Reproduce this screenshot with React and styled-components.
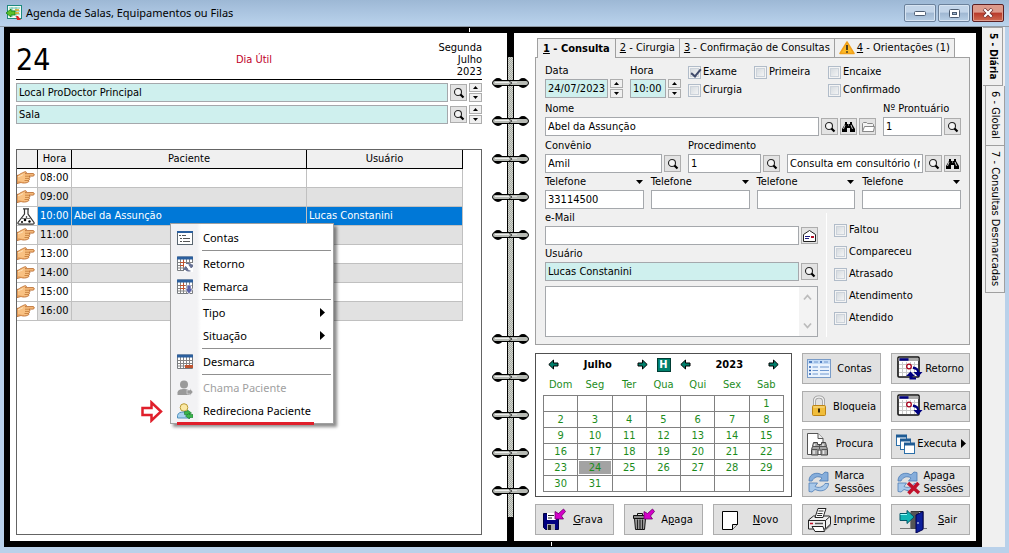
import { useId } from "react";
import styled, { createGlobalStyle, css } from "styled-components";

const GlobalStyle = createGlobalStyle`
  * {
    box-sizing: border-box;
  }

  body {
    margin: 0;
    background: #b9d1ea;
    color: #000;
    font-family: "DejaVu Sans Condensed", "DejaVu Sans", sans-serif;
    font-size: 11px;
    line-height: 12px;
  }

  button,
  input,
  textarea {
    margin: 0;
    font: inherit;
    color: inherit;
  }

  svg {
    display: block;
    flex: none;
  }
`;

const StyledWindow = styled.div`
  min-height: 100vh;
  display: flex;
  flex-direction: column;
  background: #b9d1ea;
`;

const StyledTitleBar = styled.header`
  height: 27px;
  padding: 0 5px 0 6px;
  display: flex;
  align-items: center;
  gap: 4px;

  background: linear-gradient(#9db8d5, #a9c3df 40%, #bad3ec);
  border-bottom: 1px solid #8f9aa5;
`;

const StyledTitle = styled.h1`
  flex: 1;
  margin: 0;

  font-family: "Noto Sans", "Open Sans", sans-serif;
  font-size: 11px;
  font-weight: 400;
  line-height: 16px;
`;

const StyledWindowButtons = styled.div`
  display: flex;
  gap: 2px;
`;

const StyledWindowButton = styled.button`
  width: 32px;
  height: 18px;
  padding: 0;
  display: grid;
  place-items: center;

  border: 1px solid ${({ $close }) => ($close ? "#5b1f22" : "#6b819b")};
  border-radius: 2px;
  box-shadow: inset 0 0 0 1px ${({ $close }) => ($close ? "#e09a8c" : "#d7e4f2")};
  background: ${({ $close }) =>
    $close
      ? "linear-gradient(#dc9a8b 45%, #b8392a 50%, #cf6a50)"
      : "linear-gradient(#c3d5e9 45%, #9fb7d2 50%, #b8cfe6)"};
`;

const StyledBody = styled.div`
  flex: 1;
  padding: 0 4px 6px;
  display: flex;
`;

const StyledBook = styled.main`
  position: relative;
  flex: 1;
  min-width: 0;
  display: grid;
  grid-template-columns: 497fr 7px 462fr;

  background: #fff;
  border: 6px solid #000;
`;

const StyledTick = styled.i`
  position: absolute;
  width: 1px;
  height: 4px;
  background: #fff;

  ${({ $bottom }) =>
    $bottom
      ? css`
          bottom: -5px;
          left: 56%;
        `
      : css`
          top: -5px;
          left: 47.5%;
        `}
`;

const StyledLeftPage = styled.section`
  position: relative;
  min-width: 0;
  padding: 7px 25px 6px 6px;
  display: flex;
  flex-direction: column;
`;

const StyledRightPage = styled.section`
  min-width: 0;
  padding: 5px 6px 6px 21px;
  display: flex;
  flex-direction: column;
`;

const StyledSpine = styled.div`
  z-index: 1;
  padding: 21px 0;
  display: flex;
  flex-direction: column;
  justify-content: space-between;

  border: solid #000;
  border-width: 24px 1px;
  background: repeating-conic-gradient(#d5d8d0 0 25%, #a5a8a2 0 50%) 0 0 / 2px 2px;
`;

const StyledRings = styled.div`
  display: grid;
  gap: 28px;

  svg {
    margin: 0 -16px;
  }
`;

const StyledDayHeader = styled.header`
  height: 40px;
  display: grid;
  grid-template-columns: 1fr auto 1fr;
  align-items: center;

  border-bottom: 1px solid #000;
`;

const StyledDay = styled.strong`
  font-size: 30px;
  font-weight: 400;
  line-height: 36px;
`;

const StyledDayKind = styled.span`
  padding-left: 10px;
  color: #c00028;
`;

const StyledDayDate = styled.span`
  text-align: right;
`;

const StyledLocations = styled.div`
  margin: 3px 0 25px;
  display: grid;
  gap: 3px;
`;

const StyledRow = styled.div`
  display: flex;
  align-items: center;
  gap: 2px;
`;

const StyledInput = styled.input`
  flex: 1 1 0;
  width: 0;
  min-width: 0;
  height: 19px;
  padding: 0 2px;

  background: ${({ $tinted }) => ($tinted ? "#cff0ee" : "#fff")};
  border: 1px solid #a5a8ac;
  border-radius: 0;
  outline: none;
`;

const StyledIconButton = styled.button`
  flex: none;
  width: 17px;
  height: 17px;
  padding: 0;
  display: grid;
  place-items: center;

  background: #e3e3e3;
  border: 1px solid #adadad;
`;

const StyledSpin = styled.div`
  flex: none;
  width: 13px;
  display: grid;
  gap: 1px;
`;

const StyledSpinButton = styled.button`
  height: 9px;
  padding: 0;
  display: grid;
  place-items: center;

  background: #f0f0f0;
  border: 1px solid #adadad;
`;

const StyledAgenda = styled.div`
  flex: 1;
  padding-right: 18px;
  border: 1px solid #646464;
`;

const StyledTable = styled.table`
  width: 100%;
  table-layout: fixed;
  border-collapse: separate;
  border-spacing: 0;
`;

const StyledHeadCell = styled.th`
  width: ${({ $width }) => $width || "auto"};
  height: 19px;
  padding: 0;

  background: #f0f0f0;
  border-right: 1px solid #000;
  border-bottom: 1px solid #000;
  font-weight: 400;
`;

const StyledCell = styled.td`
  height: 19px;
  padding: 0 2px;
  overflow: hidden;

  border-right: 1px solid #c0c0c0;
  border-bottom: 1px solid #c0c0c0;
  white-space: nowrap;
`;

const StyledIconCell = styled(StyledCell)`
  padding: 0;
  background: #fff;
`;

const StyledAgendaRow = styled.tr`
  color: ${({ $selected }) => ($selected ? "#fff" : "#000")};
  background: ${({ $selected, $odd }) =>
    $selected ? "#0078d7" : $odd ? "#e1e1e1" : "#fff"};
`;

const StyledMenu = styled.ul`
  position: absolute;
  top: 190px;
  left: 160px;
  width: 164px;
  margin: 0;
  padding: 2px 2px 1px;

  list-style: none;
  background: linear-gradient(to right, #f2f2f4 26px, #fff 30px);
  border: 1px solid #a0a0a0;
  box-shadow: 3px 3px 3px rgba(0, 0, 0, 0.45);
  font-family: "Noto Sans", "Open Sans", sans-serif;
`;

const StyledMenuItem = styled.button`
  width: 100%;
  height: 23px;
  padding: 0 6px 0 4px;
  display: flex;
  align-items: center;
  gap: 10px;

  background: none;
  border: 0;
  text-align: left;
  white-space: nowrap;

  &:disabled {
    color: #a0a0a0;
  }
`;

const StyledMenuLabel = styled.span`
  flex: 1;
`;

const StyledMenuSeparator = styled.li`
  height: 1px;
  margin: 1px 0 1px 29px;
  background: #909090;
`;

const StyledMarker = styled.div`
  position: absolute;
  top: 367px;
  left: 131px;
`;

const StyledUnderline = styled.li`
  position: absolute;
  right: 19px;
  bottom: -2px;
  left: 6px;
  height: 3px;
  background: #e01f2b;
`;

const StyledTabs = styled.div`
  padding-left: 2px;
  display: flex;
`;

const StyledTab = styled.button`
  height: 19px;
  margin-bottom: ${({ $active }) => ($active ? "-1px" : "0")};
  padding: 0 4px;
  display: flex;
  align-items: center;
  gap: 2px;
  z-index: ${({ $active }) => ($active ? 1 : 0)};

  background: #f0f0f0;
  border: 1px solid #a0a0a0;
  border-left-width: ${({ $active }) => ($active ? "1px" : "0")};
  border-bottom: 0;
  font-weight: ${({ $active }) => ($active ? 700 : 400)};
  white-space: nowrap;

  ${({ $active }) =>
    $active &&
    css`
      height: 20px;
      padding: 0 5px;
      position: relative;
    `}
`;

const StyledPanel = styled.form`
  padding: 4px 8px 7px 9px;

  background: #f0f0f0;
  border: 1px solid #a0a0a0;
`;

const StyledFieldRow = styled.div`
  margin-bottom: ${({ $gap }) => ($gap ? "1px" : "0")};
  display: grid;
  grid-template-columns: ${({ $columns }) => $columns};
  gap: 7px;
`;

const StyledField = styled.div`
  min-width: 0;
`;

const StyledLabelRow = styled.div`
  height: 17px;
  padding-right: 1px;
  display: flex;
  align-items: center;
  justify-content: space-between;
  white-space: nowrap;
`;

const StyledChecks = styled.div`
  display: grid;
  grid-template-columns: ${({ $columns }) => $columns || "1fr"};
  grid-auto-rows: ${({ $columns }) => ($columns ? "18px" : "22px")};
  padding-top: ${({ $columns }) => ($columns ? "1px" : "0")};
  align-content: start;
`;

const StyledCheckLabel = styled.label`
  display: flex;
  align-items: center;
  gap: 2px;
`;

const StyledCheckbox = styled.input`
  appearance: none;
  position: relative;
  width: 13px;
  height: 13px;

  background: linear-gradient(135deg, #cfd5da, #fafafa);
  border: 1px solid #b1bcc9;
  box-shadow: inset 0 0 0 1px #f4f4f4, inset 0 0 0 2px #ccd3db;

  &:checked::after {
    content: "";
    position: absolute;
    top: 0;
    left: 4px;
    width: 4px;
    height: 8px;
    border: solid #3f4a6a;
    border-width: 0 2px 2px 0;
    transform: rotate(40deg);
  }
`;

const StyledLower = styled.div`
  display: grid;
  grid-template-columns: 1fr 135px;
  gap: 8px;
`;

const StyledStatus = styled.div`
  margin-top: 4px;
  padding: 6px 0 0 7px;
  border-left: 1px solid #fff;
`;

const StyledMemo = styled.div`
  height: 51px;
  margin-top: 5px;
  display: flex;

  background: #fff;
  border: 1px solid #a5a8ac;
`;

const StyledTextarea = styled.textarea`
  flex: 1;
  min-width: 0;
  padding: 2px;

  background: none;
  border: 0;
  outline: none;
  resize: none;
`;

const StyledScroll = styled.div`
  width: 18px;
  padding: 7px 4px;
  display: flex;
  flex-direction: column;
  justify-content: space-between;
  background: #f3f3f3;
`;

const StyledBottom = styled.div`
  flex: 1;
  margin-top: 8px;
  display: grid;
  grid-template-columns: repeat(5, 1fr);
  grid-template-rows: repeat(5, 1fr);
  gap: 7px 10px;
`;

const StyledCommand = styled.button`
  min-width: 0;
  padding: 0 3px;
  display: flex;
  align-items: center;

  background: #e1e1e1;
  border: 1px solid #adadad;
  white-space: nowrap;
`;

const StyledCommandLabel = styled.span`
  flex: 1;
  display: flex;
  justify-content: center;
  align-items: center;
  gap: 4px;
  text-align: left;
  line-height: 13px;
  white-space: pre;
`;

const StyledCalendar = styled.div`
  grid-column: 1 / 4;
  grid-row: 1 / 5;
  padding: 0 7px;
  border: 1px solid #505050;
`;

const StyledCalendarHead = styled.div`
  height: 21px;
  padding: 0 5px;
  display: grid;
  grid-template-columns: 11px 1fr 11px 32px 11px 1fr 11px;
  align-items: center;
  justify-items: center;
  font-weight: 700;
`;

const StyledArrowButton = styled.button`
  padding: 0;
  background: none;
  border: 0;
`;

const StyledToday = styled.button`
  width: 14px;
  height: 14px;
  padding: 0;

  color: #fff;
  background: #00806c;
  border: 1px solid #003c34;
  font-weight: 700;
  line-height: 12px;
`;

const StyledMonth = styled.table`
  width: 100%;
  table-layout: fixed;
  border-collapse: collapse;
  color: #1c8c1c;
  text-align: center;

  th {
    height: 20px;
    padding: 0;
    font-weight: 400;
  }

  td {
    height: 16px;
    padding: 1px;
    border: 1px solid #808080;
  }
`;

const StyledDate = styled.span`
  display: block;
  height: 13px;
  line-height: 13px;
  background: ${({ $today }) => ($today ? "#a3a3a3" : "none")};
`;

const StyledSideTabs = styled.nav`
  width: 23px;
  padding-left: 3px;
  display: flex;
  flex-direction: column;
  background: #f0f0f0;
`;

const StyledSideTab = styled.button`
  width: 20px;
  margin-left: ${({ $active }) => ($active ? "-2px" : "0")};
  padding: 5px 0 6px;
  writing-mode: vertical-rl;

  background: #f0f0f0;
  border: 1px solid #a0a0a0;
  border-top-width: ${({ $active }) => ($active ? "1px" : "0")};
  border-left-width: ${({ $active }) => ($active ? "0" : "1px")};
  font-size: ${({ $active }) => ($active ? "10px" : "11px")};
  font-weight: ${({ $active }) => ($active ? 700 : 400)};
  text-align: left;
  white-space: nowrap;
`;

const AppIcon = () => (
  <svg width="16" height="16" viewBox="0 0 16 16">
    <rect x="1.5" y="0.5" width="14" height="13" fill="#f4fbf4" stroke="#1e8a80" />
    <path d="M3 3h11M3 6h11M3 9h11M6 2v10M10 2v10" stroke="#6fc4b0" />
    <path d="M0 8l5-4v2h4v4H5v2z" fill="#5cc02a" stroke="#0e7d15" strokeWidth=".8" />
    <path d="M9 5h4M9 8h4" stroke="#d6a21e" strokeWidth="1.5" />
    <path d="M10 11h2l3 4h-4z" fill="#e0252b" />
  </svg>
);

const SearchIcon = () => (
  <svg width="12" height="12" viewBox="0 0 12 12">
    <circle cx="5" cy="5" r="3.5" fill="#f4f4f4" stroke="#222" strokeWidth="1.1" />
    <path d="M7.5 7.5l3 3" stroke="#000" strokeWidth="2.2" />
  </svg>
);

const BinocularsIcon = () => (
  <svg width="13" height="12" viewBox="0 0 13 12">
    <path d="M3 1h2v2h3V1h2v2l3 5v3H8V7H5v4H0V8l3-5z" fill="#000" />
    <path d="M3 4L1.5 8M9 4l1.500 4M6 4h1" stroke="#ddd" strokeWidth=".9" />
  </svg>
);

const FolderIcon = () => (
  <svg width="14" height="12" viewBox="0 0 14 12">
    <path d="M1.500 10.500v-8l1-1h3l1 1h5l1 1v7z" fill="#f3f3f3" stroke="#888" />
    <path d="M1.500 10.500l2-5h10l-1 5z" fill="#fff" stroke="#888" />
  </svg>
);

const MailIcon = () => (
  <svg width="13" height="12" viewBox="0 0 13 12">
    <path d="M.5 4.500l6-4 6 4v7H.5z" fill="#fff" stroke="#222" />
    <path d="M2 6.500h5M2 8.500h4" stroke="#1a1a80" />
    <path d="M8 6h3v2H8z" fill="#b3122a" />
  </svg>
);

const TriangleIcon = ({ direction = "down", size = 5 }) => (
  <svg
    width={direction === "right" ? (size + 1) / 2 : size}
    height={direction === "right" ? size : (size + 1) / 2}
    viewBox={direction === "right" ? "0 0 3 5" : "0 0 5 3"}
    preserveAspectRatio="none"
  >
    <path
      d={{ up: "M0 3h5L2.500 0z", down: "M0 0h5L2.500 3z", right: "M0 0v5l3-2.500z" }[direction]}
    />
  </svg>
);

const ChevronIcon = ({ up }) => (
  <svg width="9" height="7" viewBox="0 0 9 7">
    <path
      d={up ? "M1 5.500l3.500-4 3.500 4" : "M1 1.500l3.500 4 3.500-4"}
      fill="none"
      stroke="#bcbcbc"
      strokeWidth="1.800"
    />
  </svg>
);

const WarningIcon = () => (
  <svg width="16" height="14" viewBox="0 0 16 14">
    <path
      d="M8 1l7 11.500H1z"
      fill="#fdb924"
      stroke="#f0a01a"
      strokeWidth="1.500"
      strokeLinejoin="round"
    />
    <path d="M8 4v5M8 10.200v1.600" stroke="#222" strokeWidth="1.600" />
  </svg>
);

const HandIcon = () => (
  <svg width="18" height="14" viewBox="0 0 18 14">
    <path
      d="M0 4.500C2 4.300 3 2.800 4.500 2.300 6 1.700 7.500.6 8.600.7c1.200.2.8 1.600-.2 2L16 2.600c1.700 0 1.700 2.400 0 2.500h-4c1.300.5 1.200 2-.1 2.200.9.500.7 1.900-.5 2.100.7.500.4 1.800-.8 1.900-1.600.8-4.600 1-6.600.2L0 12.500z"
      fill="#f9c182"
      stroke="#b8682a"
      strokeWidth=".9"
    />
    <path d="M8 5.200h4M8 7.400h4M7.500 9.500h4" stroke="#c47e3c" strokeWidth=".9" />
    <path d="M1 11c2-.4 3 .8 6 .4" fill="none" stroke="#dd9350" />
    <path d="M1 5.800c2-.3 3-1.500 5-2.200" fill="none" stroke="#fde3bd" />
  </svg>
);

const FlaskIcon = () => (
  <svg width="19" height="17" viewBox="0 0 19 17">
    <path
      d="M6 .8h6M7.500 1v5L1 14.500c-.4 1 .2 1.700 1 1.700h14c.8 0 1.400-.7 1-1.700L11 6V1"
      fill="#fff"
      stroke="#333"
      strokeWidth="1.200"
    />
    <path d="M5 10.500h8.500" stroke="#777" />
    <circle cx="8" cy="12" r="1.300" />
    <circle cx="12.500" cy="13.500" r="1.200" />
    <circle cx="5" cy="14" r="1" />
    <circle cx="9.500" cy="9" r=".8" />
  </svg>
);

const RingIcon = () => (
  <svg width="37" height="10" viewBox="0 0 37 10">
    <ellipse cx="6" cy="5" rx="5" ry="5" />
    <ellipse cx="31" cy="5" rx="5" ry="5" />
    <rect x=".5" y="2.500" width="36" height="5" rx="2.500" fill="#b8bbb5" stroke="#000" />
    <path d="M3 4.500h14" stroke="#eee" />
    <path d="M17 3l3 2-3 2" fill="none" stroke="#222" strokeWidth=".8" />
    <path d="M20 4.500h5" stroke="#ddd" />
  </svg>
);

const MarkerIcon = () => (
  <svg width="22" height="23" viewBox="0 0 22 23">
    <path d="M1.500 8h9V2.500L20 11.500l-9.500 9V15h-9z" fill="#fff" stroke="#e01f2b" strokeWidth="2.500" />
  </svg>
);

const ListIcon = () => (
  <svg width="16" height="14" viewBox="0 0 16 14" shapeRendering="crispEdges">
    <rect x=".5" y=".5" width="15" height="13" fill="#fff" stroke="#5a6670" />
    <path d="M0 1h16" stroke="#2b5f9e" strokeWidth="2" />
    <path d="M2 4.500h2M5 4.500h4M3 7.500h2M6 7.500h7M3 10.500h2M6 10.500h7" stroke="#555" />
  </svg>
);

const MenuGridIcon = ({ variant }) => (
  <svg width="16" height="16" viewBox="0 0 16 16">
    <path d="M.5 1v13.500h15V1z" fill="#fff" stroke="#787c80" />
    <path d="M1 6.500h14M1 9.500h14M1 12h14M3.500 3v11M6.500 3v11M9.500 3v11M12.500 3v11" stroke="#858585" />
    <path d="M0 2h16" stroke="#2b5f9e" strokeWidth="3" />
    {variant !== "clear" && <path d="M3 6.500h5M3 9.500h5M6.500 4v7" stroke="#c0532e" />}
    {variant === "return" && (
      <>
        <path d="M7 7h9v9H7z" fill="#fff" />
        <path
          d="M9 7.500h3q2.500 0 2.500 2M13.500 15H11q-2.500 0-2.500-2M12 9h4.500l-2.200 3zM6.500 13.500H11L8.700 10.500z"
          fill="#667092"
          stroke="#667092"
        />
      </>
    )}
    {variant === "move" && (
      <path d="M10 6h4v4h2l-4 5-4-5h2z" fill="#5a61a8" stroke="#fff" strokeWidth=".6" />
    )}
    {variant === "clear" && <path d="M8 12.500h8" stroke="#c0532e" strokeWidth="3" />}
  </svg>
);

const PersonIcon = ({ redirect }) => (
  <svg width="16" height="16" viewBox="0 0 16 16">
    <circle
      cx="7"
      cy="4.500"
      r={redirect ? 3.800 : 4}
      fill={redirect ? "#fbe9a5" : "#9a9a9a"}
      stroke={redirect ? "#b99a35" : "none"}
    />
    <path
      d="M.5 15v-2.500C1 9.500 4 9 7 9s5.500.5 6 3.500V15z"
      fill={redirect ? "#a9d2ee" : "#9a9a9a"}
      stroke={redirect ? "#5090bd" : "none"}
    />
    {redirect ? (
      <>
        <path d="M7.500 8.500h3V7l4 3-4 3v-1.500h-3z" fill="#39b54a" stroke="#157a2a" strokeWidth=".6" />
        <path d="M16 11.500h-3.500V10L8.500 13l4 3v-1.500H16z" fill="#39b54a" stroke="#157a2a" strokeWidth=".6" />
      </>
    ) : (
      <path d="M10 10h3V8.500l3 3.500-3 3.500V14h-3z" fill="#9a9a9a" stroke="#f2f2f4" strokeWidth=".5" />
    )}
  </svg>
);

const ArrowIcon = ({ left }) => (
  <svg width="11" height="11" viewBox="0 0 11 11">
    <path
      d={left ? "M.8 5.500L5.500 1v3h4.500v3H5.500v3z" : "M10.200 5.500L5.500 1v3H1v3h4.500v3z"}
      fill="#00806c"
      stroke="#000"
    />
  </svg>
);

const AccountsIcon = () => (
  <svg width="26" height="26" viewBox="0 0 26 26">
    <rect x="1.500" y="4.500" width="23" height="18" fill="#eaf3fd" stroke="#7a9cc8" />
    <path d="M2 7h22" stroke="#c5dcf6" strokeWidth="4" />
    <path d="M3 7h3M14 7h2M3 12h2M3 15.500h2M3 19h2" stroke="#2a5fae" strokeWidth="1.600" />
    <path d="M6.500 12H12M6.500 15.500H12M6.500 19H12M14 12h9M14 15.500h9M14 19h9M8 7h4M18 7h4" stroke="#6f98d0" />
  </svg>
);

const LockIcon = () => (
  <svg width="26" height="26" viewBox="0 0 26 26">
    <path d="M8.500 13V8q0-4 4.500-4t4.500 4v5" fill="none" stroke="#999" strokeWidth="3" />
    <path d="M8.500 13V8q0-4 4.500-4t4.500 4v5" fill="none" stroke="#efefef" strokeWidth="1.400" />
    <rect x="6.500" y="12.500" width="13" height="10" rx="1" fill="#f0bd3a" stroke="#bd8415" />
    <path d="M7.500 14h11" stroke="#fbe19a" />
    <path d="M12 15.500h2v4h-2z" fill="#3a2a08" />
  </svg>
);

const FindIcon = () => (
  <svg width="26" height="26" viewBox="0 0 26 26">
    <path d="M1.500 2.500H12l5 5v16H1.500z" fill="#fff" stroke="#555" />
    <path d="M12 2.500v5h5" fill="#eee" stroke="#555" />
    <path
      d="M7.500 11.500h4v2h4v-2h4l1 4 1 3v5.500h-6.500v-5h-3v5H5.500v-5.500l1-3z"
      fill="#a6a6a6"
      stroke="#444"
    />
    <path d="M6 18.500h5.500M15.500 18.500h5.500M7 15.500h13M13.500 14v4" stroke="#555" />
    <path d="M8.500 13v2M8 19.500v3.500M17.500 19.500v3.500M17 13v2" stroke="#e8e8e8" strokeWidth="1.500" />
  </svg>
);

const SyncIcon = ({ remove }) => (
  <svg width="26" height="26" viewBox="0 0 26 26">
    <path
      d="M3 12c0-6 5-8.500 10-7.500l3 1.300L19 3l3 .5v8.500h-8.500l2.500-3C12 6.500 8 8 6 12z"
      fill="#85addb"
      stroke="#4c7cb5"
      strokeWidth=".8"
    />
    <path
      d="M22.500 14.500c0 5-5 8.500-10.500 7L9 20.500 6 23l-3-.5V14h8.500L9 17.500c4 2 8 .5 10-3z"
      fill="#a8c8ea"
      stroke="#4c7cb5"
      strokeWidth=".8"
    />
    {remove && <path d="M13 14l11 10M23.500 14l-10 10.500" stroke="#c1112b" strokeWidth="3.500" />}
  </svg>
);

const PrinterIcon = () => (
  <svg width="26" height="26" viewBox="0 0 26 26">
    <path d="M19 17l6-3v5l-6 5z" fill="#999" />
    <path d="M2.500 13l5-4h16l1 1v7l-5 5H2.500z" fill="#eee" stroke="#222" />
    <path d="M2.500 13.500h17v8M19.500 13.500l4.500-4" fill="none" stroke="#222" />
    <path d="M9 10.500l3-9h8l-3 9z" fill="#fff" stroke="#222" />
    <path d="M12.500 4h5M11.500 6.500h5M11 8.500h5" stroke="#333" />
    <path d="M6 19.500h11l1.500 5H9z" fill="#fff" stroke="#222" />
    <path d="M4 16.500h3" stroke="#c1112b" strokeWidth="1.500" />
    <path d="M9 16.500h8" stroke="#555" strokeWidth="1.500" />
  </svg>
);

const CalendarIcon = ({ both }) => (
  <svg width="28" height="26" viewBox="0 0 28 26">
    <rect x="3" y="2" width="21" height="20" rx="1" fill="#fff" stroke="#111" strokeWidth="1.600" />
    <path d="M3.500 4.500h20" stroke="#aaa" strokeWidth="3" />
    <path d="M4.500 4.500h9" stroke="#000080" strokeWidth="2.500" />
    <path d="M4 9.500h19M4 13.500h19M4 17.500h19M7.500 7v14M11.500 7v14M15.500 7v14M19.500 7v14" stroke="#c9c9c9" />
    <circle cx="14" cy="11.500" r="2.300" fill="#fff" stroke="#a8001c" strokeWidth="1.300" />
    <path d="M18 11.500q6 .5 6 5.500h3.500L23 22l-4.500-5H22q0-2.500-4-3z" fill="#000080" />
    {both && <path d="M21 24.500h-6.500V21H11l4.500-4.500L20 21h-2.500v1.500H21z" fill="#000080" />}
  </svg>
);

const RunIcon = () => (
  <svg width="22" height="26" viewBox="0 0 22 26">
    {[0, 4, 8].map((step) => (
      <g key={step} transform={`translate(${step} ${step})`}>
        <rect x="1.500" y="4.500" width="10" height="10" fill="#fff" stroke="#2c6fa8" />
        <path d="M1 5h11" stroke="#1e5b94" strokeWidth="3" />
      </g>
    ))}
  </svg>
);

const DoorIcon = () => (
  <svg width="34" height="26" viewBox="0 0 34 26">
    <path d="M5 21.500h27" stroke="#777" />
    <path d="M16 21V4.500h12V21z" fill="#e5e5e5" stroke="#222" />
    <path d="M16 4.500h8V21h-8z" fill="#555" />
    <path d="M21 8l7-3.500v18l-7 3.500z" fill="#0d1f9b" stroke="#000050" />
    <path d="M23 15v2" stroke="#fff" />
    <path d="M5 6.500h7V3.500l7 6.500-7 6.500v-3H5z" fill="#10b5b5" stroke="#056" />
    <path d="M5.500 7.500H12" stroke="#9ff" />
  </svg>
);

const SaveIcon = () => (
  <svg width="27" height="26" viewBox="0 0 27 26">
    <path d="M4.500 6.500h15v16h-13l-2-2z" fill="#000080" stroke="#000040" />
    <path d="M8 6h9v7H8z" fill="#fff" />
    <path d="M9 8.500h6M9 11h4" stroke="#222" />
    <path d="M8 17h8v6H8z" fill="#aaa" />
    <path d="M9 18h3v5H9z" fill="#222" />
    <path d="M26.500 4.500L22.500 9l2 3H16V4.500l3.500 2L24.500 2z" fill="#d400c8" stroke="#6a0068" strokeWidth=".8" />
  </svg>
);

const TrashIcon = () => (
  <svg width="27" height="26" viewBox="0 0 27 26">
    <path d="M6.500 11.500h11l-1 11h-9z" fill="#a5a5a5" stroke="#111" />
    <path d="M9.500 12.500v10M12 12.500v10M14.500 12.500v10" stroke="#222" strokeWidth="1.200" />
    <path d="M5.500 8.500h13v3h-13z" fill="#888" stroke="#111" />
    <path d="M9.500 8.500v-2h5v2" fill="none" stroke="#111" />
    <path d="M26.500 4.500L22.500 9l2 3H16V4.500l3.500 2L24.500 2z" fill="#d400c8" stroke="#6a0068" strokeWidth=".8" />
  </svg>
);

const PageIcon = () => (
  <svg width="26" height="26" viewBox="0 0 26 26">
    <path d="M5.500 4.500h15v13l-5 5h-10z" fill="#fff" stroke="#000" />
    <path d="M20.500 17.500h-5v5" fill="#ddd" stroke="#000" />
  </svg>
);

const Spin = ({ name }) => (
  <StyledSpin>
    <StyledSpinButton type="button" aria-label={`${name}: próximo`}>
      <TriangleIcon direction="up" />
    </StyledSpinButton>
    <StyledSpinButton type="button" aria-label={`${name}: anterior`}>
      <TriangleIcon />
    </StyledSpinButton>
  </StyledSpin>
);

const icons = {
  search: [SearchIcon, "Pesquisar"],
  binoculars: [BinocularsIcon, "Procurar"],
  folder: [FolderIcon, "Pasta"],
  mail: [MailIcon, "Enviar e-mail"],
};

const Field = ({ label, value = "", tinted, buttons = [], spin, phone, hideLabel }) => {
  const id = useId();

  return (
    <StyledField>
      <StyledLabelRow>
        {!hideLabel && <label htmlFor={id}>{label}</label>}
        {phone && <TriangleIcon size={7} />}
      </StyledLabelRow>
      <StyledRow>
        <StyledInput
          id={id}
          aria-label={hideLabel ? label : undefined}
          defaultValue={value}
          $tinted={tinted}
        />
        {buttons.map((name) => {
          const [Icon, title] = icons[name];

          return (
            <StyledIconButton key={name} type="button" aria-label={title}>
              <Icon />
            </StyledIconButton>
          );
        })}
        {spin && <Spin name={label} />}
      </StyledRow>
    </StyledField>
  );
};

const Check = ({ label, checked }) => (
  <StyledCheckLabel>
    <StyledCheckbox type="checkbox" defaultChecked={checked} />
    {label}
  </StyledCheckLabel>
);

const appointments = [
  { hour: "08:00" },
  { hour: "09:00" },
  { hour: "10:00", patient: "Abel da Assunção", user: "Lucas Constanini", selected: true },
  { hour: "11:00" },
  { hour: "13:00" },
  { hour: "14:00" },
  { hour: "15:00" },
  { hour: "16:00" },
];

const menuItems = [
  { label: "Contas", icon: <ListIcon /> },
  null,
  { label: "Retorno", icon: <MenuGridIcon variant="return" /> },
  { label: "Remarca", icon: <MenuGridIcon variant="move" /> },
  null,
  { label: "Tipo", submenu: true },
  { label: "Situação", submenu: true },
  null,
  { label: "Desmarca", icon: <MenuGridIcon variant="clear" /> },
  null,
  { label: "Chama Paciente", icon: <PersonIcon />, disabled: true },
  { label: "Redireciona Paciente", icon: <PersonIcon redirect /> },
];

const ContextMenu = () => (
  <StyledMenu>
    {menuItems.map((item, index) =>
      item ? (
        <li key={item.label}>
          <StyledMenuItem type="button" disabled={item.disabled}>
            {item.icon || <svg width="16" height="16" />}
            <StyledMenuLabel>{item.label}</StyledMenuLabel>
            {item.submenu && <TriangleIcon direction="right" size={9} />}
          </StyledMenuItem>
        </li>
      ) : (
        <StyledMenuSeparator key={index} />
      )
    )}
    <StyledUnderline />
  </StyledMenu>
);

const Location = ({ label, value }) => (
  <StyledRow>
    <StyledInput aria-label={label} defaultValue={value} $tinted />
    <StyledIconButton type="button" aria-label={`Pesquisar ${label}`}>
      <SearchIcon />
    </StyledIconButton>
    <Spin name={label} />
  </StyledRow>
);

const LeftPage = () => (
  <StyledLeftPage>
    <StyledDayHeader>
      <StyledDay>24</StyledDay>
      <StyledDayKind>Dia Útil</StyledDayKind>
      <StyledDayDate>
        Segunda
        <br />
        Julho
        <br />
        2023
      </StyledDayDate>
    </StyledDayHeader>
    <StyledLocations>
      <Location label="Local" value="Local ProDoctor Principal" />
      <Location label="Sala" value="Sala" />
    </StyledLocations>
    <StyledAgenda>
      <StyledTable>
        <thead>
          <tr>
            <StyledHeadCell $width="21px" />
            <StyledHeadCell $width="34px">Hora</StyledHeadCell>
            <StyledHeadCell>Paciente</StyledHeadCell>
            <StyledHeadCell $width="35%">Usuário</StyledHeadCell>
          </tr>
        </thead>
        <tbody>
          {appointments.map(({ hour, patient, user, selected }, index) => (
            <StyledAgendaRow key={hour} $selected={selected} $odd={index % 2 === 1}>
              <StyledIconCell>{selected ? <FlaskIcon /> : <HandIcon />}</StyledIconCell>
              <StyledCell>{hour}</StyledCell>
              <StyledCell>{patient}</StyledCell>
              <StyledCell>{user}</StyledCell>
            </StyledAgendaRow>
          ))}
        </tbody>
      </StyledTable>
    </StyledAgenda>
    <ContextMenu />
    <StyledMarker>
      <MarkerIcon />
    </StyledMarker>
  </StyledLeftPage>
);

const AppointmentForm = () => (
  <StyledPanel>
    <StyledFieldRow $columns="78px 51px 1fr" $gap>
      <Field label="Data" value="24/07/2023" tinted spin />
      <Field label="Hora" value="10:00" tinted spin />
      <StyledChecks $columns="66px 74px 1fr">
        <Check label="Exame" checked />
        <Check label="Primeira" />
        <Check label="Encaixe" />
        <Check label="Cirurgia" />
        <span />
        <Check label="Confirmado" />
      </StyledChecks>
    </StyledFieldRow>
    <StyledFieldRow $columns="1fr 78px" $gap>
      <Field
        label="Nome"
        value="Abel da Assunção"
        buttons={["search", "binoculars", "folder"]}
      />
      <Field label="Nº Prontuário" value="1" buttons={["search"]} />
    </StyledFieldRow>
    <StyledFieldRow $columns="136fr 92fr 174fr">
      <Field label="Convênio" value="Amil" buttons={["search"]} />
      <Field label="Procedimento" value="1" buttons={["search"]} />
      <Field
        label="Descrição"
        value="Consulta em consultório (r"
        buttons={["search", "binoculars"]}
        hideLabel
      />
    </StyledFieldRow>
    <StyledFieldRow $columns="repeat(4, 1fr)">
      <Field label="Telefone" value="33114500" phone />
      <Field label="Telefone" phone />
      <Field label="Telefone" phone />
      <Field label="Telefone" phone />
    </StyledFieldRow>
    <StyledLower>
      <div>
        <Field label="e-Mail" buttons={["mail"]} />
        <Field label="Usuário" value="Lucas Constanini" tinted buttons={["search"]} />
        <StyledMemo>
          <StyledTextarea aria-label="Observações" />
          <StyledScroll>
            <ChevronIcon up />
            <ChevronIcon />
          </StyledScroll>
        </StyledMemo>
      </div>
      <StyledStatus>
        <StyledChecks>
          <Check label="Faltou" />
          <Check label="Compareceu" />
          <Check label="Atrasado" />
          <Check label="Atendimento" />
          <Check label="Atendido" />
        </StyledChecks>
      </StyledStatus>
    </StyledLower>
  </StyledPanel>
);

const weekDays = ["Dom", "Seg", "Ter", "Qua", "Qui", "Sex", "Sab"];
const firstWeekDay = 6;
const daysInMonth = 31;

const Calendar = () => (
  <StyledCalendar>
    <StyledCalendarHead>
      <StyledArrowButton aria-label="Mês anterior">
        <ArrowIcon left />
      </StyledArrowButton>
      <span>Julho</span>
      <StyledArrowButton aria-label="Próximo mês">
        <ArrowIcon />
      </StyledArrowButton>
      <StyledToday>H</StyledToday>
      <StyledArrowButton aria-label="Ano anterior">
        <ArrowIcon left />
      </StyledArrowButton>
      <span>2023</span>
      <StyledArrowButton aria-label="Próximo ano">
        <ArrowIcon />
      </StyledArrowButton>
    </StyledCalendarHead>
    <StyledMonth>
      <thead>
        <tr>
          {weekDays.map((day) => (
            <th key={day}>{day}</th>
          ))}
        </tr>
      </thead>
      <tbody>
        {[0, 1, 2, 3, 4, 5].map((week) => (
          <tr key={week}>
            {weekDays.map((name, index) => {
              const date = week * 7 + index - firstWeekDay + 1;

              return (
                <td key={name}>
                  {date > 0 && date <= daysInMonth && (
                    <StyledDate $today={date === 24}>{date}</StyledDate>
                  )}
                </td>
              );
            })}
          </tr>
        ))}
      </tbody>
    </StyledMonth>
  </StyledCalendar>
);

const Command = ({ icon, children }) => (
  <StyledCommand>
    {icon}
    <StyledCommandLabel>{children}</StyledCommandLabel>
  </StyledCommand>
);

const RightPage = () => (
  <StyledRightPage>
    <StyledTabs>
      <StyledTab $active>
        <span>
          <u>1</u> - Consulta
        </span>
      </StyledTab>
      <StyledTab>
        <span>
          <u>2</u> - Cirurgia
        </span>
      </StyledTab>
      <StyledTab>
        <span>
          <u>3</u> - Confirmação de Consultas
        </span>
      </StyledTab>
      <StyledTab>
        <WarningIcon />
        <span>
          <u>4</u> - Orientações (1)
        </span>
      </StyledTab>
    </StyledTabs>
    <AppointmentForm />
    <StyledBottom>
      <Calendar />
      <Command icon={<AccountsIcon />}>Contas</Command>
      <Command icon={<CalendarIcon both />}>Retorno</Command>
      <Command icon={<LockIcon />}>Bloqueia</Command>
      <Command icon={<CalendarIcon />}>Remarca</Command>
      <Command icon={<FindIcon />}>Procura</Command>
      <Command icon={<RunIcon />}>
        Executa
        <TriangleIcon direction="right" size={9} />
      </Command>
      <Command icon={<SyncIcon />}>{"Marca\nSessões"}</Command>
      <Command icon={<SyncIcon remove />}>{"Apaga\nSessões"}</Command>
      <Command icon={<SaveIcon />}>
        <span>
          <u>G</u>rava
        </span>
      </Command>
      <Command icon={<TrashIcon />}>
        <span>
          A<u>p</u>aga
        </span>
      </Command>
      <Command icon={<PageIcon />}>
        <span>
          <u>N</u>ovo
        </span>
      </Command>
      <Command icon={<PrinterIcon />}>
        <span>
          <u>I</u>mprime
        </span>
      </Command>
      <Command icon={<DoorIcon />}>
        <span>
          <u>S</u>air
        </span>
      </Command>
    </StyledBottom>
  </StyledRightPage>
);

const Rings = () => (
  <StyledRings>
    {[1, 2, 3, 4, 5].map((ring) => (
      <RingIcon key={ring} />
    ))}
  </StyledRings>
);

const App = () => (
  <>
    <GlobalStyle />
    <StyledWindow>
      <StyledTitleBar>
        <AppIcon />
        <StyledTitle>Agenda de Salas, Equipamentos ou Filas</StyledTitle>
        <StyledWindowButtons>
          <StyledWindowButton aria-label="Minimizar">
            <svg width="12" height="6" viewBox="0 0 12 6">
              <rect x=".5" y="1.500" width="11" height="4" rx="1" fill="#fff" stroke="#4d5d72" />
            </svg>
          </StyledWindowButton>
          <StyledWindowButton aria-label="Restaurar">
            <svg width="11" height="9" viewBox="0 0 11 9">
              <rect x=".5" y=".5" width="10" height="8" rx="1" fill="#fff" stroke="#4d5d72" />
              <rect x="3.500" y="3.500" width="4" height="2" fill="#9fb7d2" stroke="#4d5d72" />
            </svg>
          </StyledWindowButton>
          <StyledWindowButton aria-label="Fechar" $close>
            <svg width="12" height="10" viewBox="0 0 12 10">
              <path d="M2 1l8 8M10 1L2 9" stroke="#6b2a2a" strokeWidth="3.600" />
              <path d="M2.300 1.300l7.400 7.400M9.700 1.300L2.300 8.700" stroke="#fff" strokeWidth="2.200" />
            </svg>
          </StyledWindowButton>
        </StyledWindowButtons>
      </StyledTitleBar>
      <StyledBody>
        <StyledBook>
          <LeftPage />
          <StyledSpine>
            <Rings />
            <Rings />
          </StyledSpine>
          <RightPage />
          <StyledTick />
          <StyledTick $bottom />
        </StyledBook>
        <StyledSideTabs>
          <StyledSideTab $active>5 - Diária</StyledSideTab>
          <StyledSideTab>6 - Global</StyledSideTab>
          <StyledSideTab>7 - Consultas Desmarcadas</StyledSideTab>
        </StyledSideTabs>
      </StyledBody>
    </StyledWindow>
  </>
);

export default App;
